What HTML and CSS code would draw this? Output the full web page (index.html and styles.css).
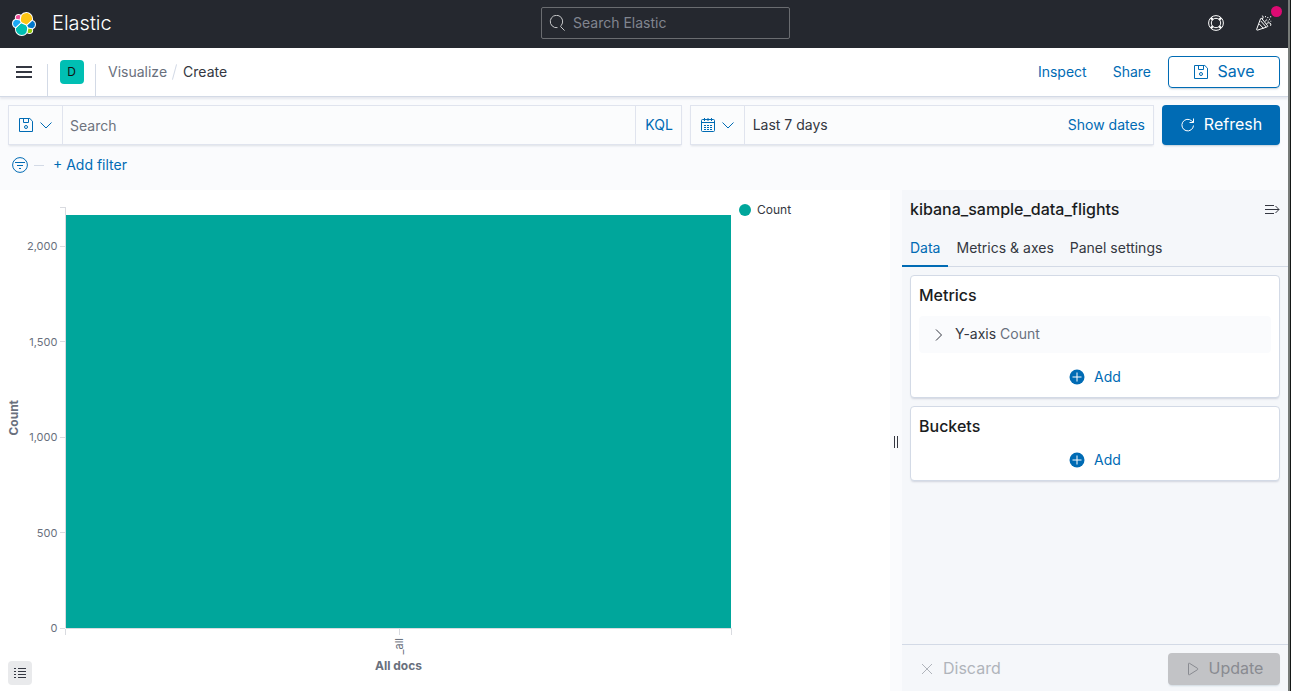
FILE: index.html
```html
<!DOCTYPE html>
<html lang="en">
<head>
<meta charset="utf-8">
<title>Create - Elastic</title>
<link rel="stylesheet" href="styles.css">
</head>
<body>
<div class="app">
  <header class="header">
    <a class="brand" href="#">
      <svg class="brand-logo" viewBox="0 0 32 32" aria-hidden="true">
        <g stroke="#fff" stroke-width="2.6" stroke-linejoin="round" paint-order="stroke">
          <path fill="#fec514" d="M12.58 13.787l7.002 3.211 7.066-6.213a7.849 7.849 0 00.152-1.557c0-4.287-3.464-7.772-7.722-7.772a7.718 7.718 0 00-6.38 3.357l-1.175 6.117z"/>
          <path fill="#00bfb3" d="M5.333 21.228A7.964 7.964 0 005.18 22.8c0 4.3 3.475 7.796 7.746 7.796a7.72 7.72 0 006.393-3.389l1.165-6.104-1.557-2.978-7.03-3.211z"/>
          <path fill="#f04e98" d="M5.288 9.067l4.8 1.137L11.14 4.73a3.785 3.785 0 00-2.3-.775A3.803 3.803 0 005.05 7.76c0 .445.08.886.237 1.302z"/>
          <path fill="#1ba9f5" d="M4.872 10.214a5.317 5.317 0 00-3.54 5.026 5.34 5.34 0 003.43 4.982l6.733-6.115-1.236-2.652z"/>
          <path fill="#93c90e" d="M20.87 27.208a3.766 3.766 0 002.286.78 3.786 3.786 0 003.783-3.785 3.78 3.78 0 00-.234-1.302l-4.797-1.128z"/>
          <path fill="#0077cc" d="M21.848 20.563l5.28 1.237a5.34 5.34 0 003.54-5.027 5.333 5.333 0 00-3.424-4.972l-6.906 6.075z"/>
        </g>
      </svg>
      <span>Elastic</span>
    </a>
    <label class="global-search">
      <svg class="icon" viewBox="0 0 16 16" aria-hidden="true"><path d="M8.500 12.600A6.200 6.200 0 1 1 12.200 10.500L11.600 11.600L15.600 15.600"/></svg>
      <input type="search" placeholder="Search Elastic" aria-label="Search Elastic">
    </label>
    <div class="header-actions">
      <button class="header-button" type="button" aria-label="Help">
        <svg class="icon" viewBox="0 0 16 16"><circle cx="8" cy="8" r="7.400"/><circle cx="8" cy="8" r="4.700"/><path stroke-width="2.200" d="M2.900 2.900l1.900 1.900M13.100 2.900l-1.900 1.900M2.900 13.100l1.900-1.900M13.100 13.100l-1.900-1.900"/></svg>
      </button>
      <button class="header-button" type="button" aria-label="What's new">
        <svg class="icon" viewBox="0 0 16 16"><path d="M4.600 3.600L.7 14.200q-.3 1.200.9.900l9.800-3.300q.8-.4.1-1.200L5.900 3.700q-.9-.9-1.300-.1zM4.800 6l5.400 6M3.300 9l4.300 4.500M6.400 4.200Q8 1.900 6.400.6M8.800 6.600l2.400-2.200M10.600 8.600q1.500-1.400 3.200-.7 1.700.9.800 2.900"/><path d="M9.500 1.100v1.100M11.800 3v-1M14.700 1.200v1.200M13 4.300h1M14.800 5.800v.8M12.700 6.100h-1"/></svg>
        <span class="notification-dot"></span>
      </button>
    </div>
  </header>

  <nav class="navbar" aria-label="Page">
    <button class="menu-button" type="button" aria-label="Toggle navigation">
      <svg class="icon" viewBox="0 0 16 16"><path stroke-width="2" d="M0 3h16M0 8h16M0 13h16"/></svg>
    </button>
    <div class="space-slot"><button class="space-avatar" type="button" aria-label="Default space">D</button></div>
    <ol class="breadcrumbs">
      <li><a href="#">Visualize</a></li>
      <li aria-current="page">Create</li>
    </ol>
    <div class="nav-actions">
      <a href="#">Inspect</a>
      <a href="#">Share</a>
      <button class="button button-outline" type="button">
        <svg class="icon" viewBox="0 0 16 16"><path d="M1.500 1.500h10.300l2.700 2.700v10.300h-13zM5.500 1.500v4h5v-4"/><circle cx="8" cy="10" r="1.500"/></svg>
        <span>Save</span>
      </button>
    </div>
  </nav>

  <section class="query">
    <div class="query-row">
      <div class="control search-control">
        <button class="control-prepend" type="button" aria-label="Saved queries">
          <svg class="icon" viewBox="0 0 16 16"><path d="M1.500 1.500h10.300l2.700 2.700v10.300h-13zM5.500 1.500v4h5v-4"/><circle cx="8" cy="10" r="1.500"/></svg>
          <svg class="icon chevron" viewBox="0 0 12 12"><path d="M.5 3.500L6 9l5.500-5.500"/></svg>
        </button>
        <input type="text" placeholder="Search" aria-label="Search">
        <button class="kql" type="button">KQL</button>
      </div>
      <div class="control date-control">
        <button class="control-prepend" type="button" aria-label="Date quick select">
          <svg class="icon" viewBox="0 0 16 16"><rect x="1.500" y="2.500" width="13" height="12" rx="1"/><path d="M1.500 5.500h13M4.500 1v3M8 1v3M11.500 1v3"/><path stroke-dasharray="2 1" d="M4 8.500h8M4 10.500h8M4 12.500h8"/></svg>
          <svg class="icon chevron" viewBox="0 0 12 12"><path d="M.5 3.500L6 9l5.500-5.500"/></svg>
        </button>
        <button class="date-range" type="button">Last 7 days</button>
        <button class="show-dates" type="button">Show dates</button>
      </div>
      <button class="button button-primary" type="button">
        <svg class="icon" viewBox="0 0 16 16"><path d="M13.500 8.500A5.800 5.800 0 1 1 11.700 3.900L13.500 5.500M13.500 1.500v4h-4"/></svg>
        <span>Refresh</span>
      </button>
    </div>
    <div class="filter-row">
      <button class="filter-button" type="button" aria-label="Filter options">
        <svg class="icon" viewBox="0 0 16 16"><circle cx="8" cy="8" r="7.400"/><path d="M3 5.500h10M5 8.500h6M7 11.500h2"/></svg>
      </button>
      <span class="filter-dash"></span>
      <button class="link-button" type="button">+ Add filter</button>
    </div>
  </section>

  <main class="workspace">
    <section class="visualization" aria-label="Visualization">
      <div class="chart">
        <div class="y-title"><span>Count</span></div>
        <div class="y-axis">
          <span class="axis-end"></span><span>2,000</span><span>1,500</span><span>1,000</span><span>500</span><span>0</span>
        </div>
        <div class="plot"><div class="bar"></div></div>
        <div class="x-axis"><span class="x-label">_all</span></div>
        <div class="x-title">All docs</div>
      </div>
      <button class="legend-item" type="button"><span class="legend-dot"></span>Count</button>
      <button class="legend-toggle" type="button" aria-label="Toggle legend">
        <svg class="icon" viewBox="0 0 12 12"><path d="M0 1.500h2M4 1.500h8M0 4.500h2M4 4.500h8M0 7.500h2M4 7.500h8M0 10.500h2M4 10.500h8"/></svg>
      </button>
    </section>

    <div class="resizer" role="separator" aria-orientation="vertical"><span class="grip"></span></div>

    <aside class="sidebar">
      <div class="sidebar-title">
        <h2>kibana_sample_data_flights</h2>
        <button class="icon-button" type="button" aria-label="Collapse sidebar">
          <svg class="icon" viewBox="0 0 16 16"><path d="M1 3.500h9M1 7.500h14M1 11.500h9M11.500 4l3.500 3.500L11.500 11"/></svg>
        </button>
      </div>
      <div class="tabs" role="tablist">
        <button class="tab tab-selected" type="button" role="tab" aria-selected="true">Data</button>
        <button class="tab" type="button" role="tab">Metrics &amp; axes</button>
        <button class="tab" type="button" role="tab">Panel settings</button>
      </div>
      <div class="panels">
        <section class="panel">
          <h3>Metrics</h3>
          <button class="agg-row" type="button">
            <svg class="icon" viewBox="0 0 16 16"><path d="M5 2.500l5.500 5.500L5 13.500"/></svg>
            <span>Y-axis <span class="subdued">Count</span></span>
          </button>
          <button class="add-button" type="button">
            <svg class="icon" viewBox="0 0 16 16"><circle class="add-disc" cx="8" cy="8" r="7.500"/><path class="add-cross" d="M3.500 8h9M8 3.500v9"/></svg>Add
          </button>
        </section>
        <section class="panel">
          <h3>Buckets</h3>
          <button class="add-button" type="button">
            <svg class="icon" viewBox="0 0 16 16"><circle class="add-disc" cx="8" cy="8" r="7.500"/><path class="add-cross" d="M3.500 8h9M8 3.500v9"/></svg>Add
          </button>
        </section>
      </div>
      <footer class="sidebar-footer">
        <button class="button button-empty" type="button" disabled>
          <svg class="icon" viewBox="0 0 16 16"><path d="M3 3l10 10M13 3L3 13"/></svg>
          <span>Discard</span>
        </button>
        <button class="button button-disabled" type="button" disabled>
          <svg class="icon" viewBox="0 0 16 16"><path d="M3.500 2.800v10.400q0 1 1 .5l8-5q.9-.7 0-1.400l-8-5q-1-.5-1 .5z"/></svg>
          <span>Update</span>
        </button>
      </footer>
    </aside>
  </main>
</div>
</body>
</html>
```
FILE: styles.css
```css
* { box-sizing: border-box; }

body {
  margin: 0;
  background: #777b78;
  border-right: 1px solid #151817;
  color: #343741;
  font: 400 14px/20px Inter, "Liberation Sans", sans-serif;
}

button, input {
  margin: 0;
  padding: 0;
  border: 0;
  background: none;
  color: inherit;
  font: inherit;
}

a { color: #006bb4; text-decoration: none; }
h2, h3 { margin: 0; color: #1a1c21; font-weight: 600; }

.icon {
  flex: none;
  width: 16px;
  height: 16px;
  fill: none;
  stroke: currentColor;
}

.app {
  display: flex;
  flex-direction: column;
  min-height: 100vh;
  margin-right: 2px;
  background: #fff;
}

/* Dark header */
.header {
  display: grid;
  grid-template-columns: 529fr 249px 498fr;
  align-items: center;
  height: 48px;
  padding-left: 12px;
  background: #25282f;
}

.brand {
  display: flex;
  align-items: center;
  gap: 16px;
  color: #fff;
  font-size: 20px;
  font-weight: 300;
}

.brand span { padding-bottom: 2px; }
.brand-logo { width: 24px; height: 24px; overflow: visible; }

.global-search {
  display: flex;
  align-items: center;
  gap: 8px;
  height: 32px;
  margin-bottom: 2px;
  padding: 0 7px;
  border: 1px solid #6a6c70;
  border-radius: 2px;
  color: #c6c7c9;
}

.global-search input { flex: 1; min-width: 0; outline: 0; }
.global-search input::placeholder { color: #81858f; opacity: 1; }

.header-actions { display: flex; justify-content: flex-end; color: #fff; }

.header-button {
  display: grid;
  place-items: center;
  position: relative;
  width: 48px;
  height: 48px;
  padding-bottom: 2px;
}

.notification-dot {
  position: absolute;
  top: 6px;
  right: 6px;
  width: 11px;
  height: 11px;
  border-radius: 50%;
  background: #dd0a73;
}

/* Breadcrumb bar */
.navbar {
  display: flex;
  align-items: center;
  height: 49px;
  padding-right: 8px;
  border-bottom: 1px solid #d3dae6;
  box-shadow: 0 2px 2px rgba(152, 162, 179, 0.2);
  z-index: 1;
}

.menu-button { display: grid; place-items: center; width: 47px; height: 48px; }

.space-slot {
  display: flex;
  justify-content: center;
  align-self: flex-end;
  width: 49px;
  height: 32px;
  border: solid #d3dae6;
  border-width: 0 1px;
}

.space-avatar {
  width: 24px;
  height: 24px;
  margin-top: -4px;
  border-radius: 4px;
  background: #00bfb3;
  color: #111;
  font-size: 12px;
  line-height: 24px;
}

.breadcrumbs {
  display: flex;
  margin: 0 0 0 12px;
  padding: 0;
  list-style: none;
}

.breadcrumbs li { display: flex; }
.breadcrumbs a { color: #69707d; }

.breadcrumbs li + li::before {
  content: "";
  width: 1px;
  height: 16px;
  margin: 2px 8px 2px 7px;
  background: #d3dae6;
  transform: rotate(15deg);
}

.nav-actions { display: flex; align-items: center; gap: 26px; margin-left: auto; }
.nav-actions .button { margin-left: -9px; }

.button {
  display: flex;
  align-items: center;
  justify-content: center;
  gap: 8px;
  height: 32px;
  border-radius: 4px;
  font-size: 16px;
}

.button span { padding-bottom: 2px; }

.button-outline {
  width: 112px;
  border: 1px solid #006bb4;
  color: #006bb4;
  box-shadow: 0 2px 2px -1px rgba(54, 97, 126, 0.3);
}

.button-primary {
  width: 118px;
  height: 40px;
  background: #006bb4;
  color: #fff;
  box-shadow: 0 2px 2px -1px rgba(54, 97, 126, 0.3);
}

/* Query bar */
.query { padding: 8px 8px 0; height: 93px; background: #fafbfd; }
.query-row { display: flex; gap: 8px; }

.control {
  display: flex;
  height: 40px;
  border: 1px solid #e0e4ee;
  background: #fbfcfd;
  box-shadow: 0 2px 2px -1px rgba(152, 162, 179, 0.3);
}

.search-control { flex: 674; }
.date-control { flex: 464; }

.control-prepend {
  display: flex;
  align-items: center;
  gap: 6px;
  padding: 0 10px 0 9px;
  border-right: 1px solid #e0e4ee;
  color: #006bb4;
}

.chevron { width: 12px; height: 12px; }

.control input { flex: 1; min-width: 0; padding: 2px 7px 0; outline: 0; }
.control input::placeholder { color: #6e737e; opacity: 1; }

.kql { width: 46px; padding-left: 2px; border-left: 1px solid #e0e4ee; color: #006bb4; }
.date-range { flex: 1; padding-left: 8px; text-align: left; }
.show-dates { padding: 0 8px; color: #006bb4; }

.filter-row { display: flex; align-items: center; margin-top: 10px; padding-left: 4px; }
.filter-button { display: flex; color: #006bb4; }
.filter-dash { width: 10px; height: 1px; margin: 0 9px 0 6px; background: #d3dae6; }
.link-button { color: #006bb4; }

/* Visualization */
.workspace { display: flex; flex: 1; }

.visualization {
  display: flex;
  position: relative;
  flex: 1;
  padding-top: 17px;
}

.chart {
  display: grid;
  flex: 1;
  grid-template: 1fr 27px 36px / 27px 39px 1fr;
  min-width: 0;
  color: #69707d;
  font-size: 11px;
  line-height: 16px;
}

.y-title { display: grid; place-items: center; font-size: 12px; font-weight: 700; }
.y-title span { writing-mode: vertical-rl; transform: rotate(180deg); }

.y-axis {
  display: grid;
  grid-template-rows: 0fr 2fr 5fr 5fr 5fr 5fr;
  border-right: 1px solid #d9dbe0;
  text-align: right;
}

.y-axis span {
  display: flex;
  align-items: center;
  align-self: end;
  justify-content: flex-end;
  gap: 3px;
  height: 16px;
  margin-bottom: -8px;
}

.y-axis span::after { content: ""; width: 5px; height: 1px; background: #d9dbe0; }
.y-axis .axis-end { height: 1px; margin-bottom: 0; }

.plot { display: flex; align-items: flex-end; }
.bar { width: 100%; height: 98%; background: #00a69b; }

.x-axis {
  display: flex;
  grid-column: 3;
  flex-direction: column;
  align-items: center;
  margin-right: -1px;
  border-top: 1px solid #d9dbe0;
  background:
    linear-gradient(#d9dbe0, #d9dbe0) 50% 0 / 1px 6px no-repeat,
    linear-gradient(#d9dbe0, #d9dbe0) 100% 0 / 1px 6px no-repeat;
}

.x-axis::before {
  content: "";
  align-self: flex-start;
  width: 1px;
  height: 6px;
  margin-left: -1px;
  background: #d9dbe0;
}

.x-label { margin-top: 3px; writing-mode: vertical-rl; transform: rotate(180deg); }
.x-title { grid-column: 3; margin-top: 3px; text-align: center; font-size: 12px; font-weight: 700; }

.legend-item {
  display: flex;
  align-items: center;
  align-self: flex-start;
  gap: 6px;
  width: 159px;
  margin-top: -5px;
  padding-left: 8px;
  font-size: 12px;
  line-height: 16px;
}

.legend-dot { width: 12px; height: 12px; border-radius: 50%; background: #00a69b; }

.legend-toggle {
  display: grid;
  position: absolute;
  bottom: 6px;
  left: 8px;
  place-items: center;
  width: 24px;
  height: 24px;
  border-radius: 4px;
  background: #e9eaec;
}

.legend-toggle .icon { width: 12px; height: 12px; }

.resizer { display: grid; place-items: center; width: 12px; padding-top: 2px; background: #fafbfd; }
.grip { width: 4px; height: 12px; border: solid #343741; border-width: 0 1px; }

/* Sidebar */
.sidebar { display: flex; flex-direction: column; width: 386px; background: #f5f7fa; }

.sidebar-title {
  display: flex;
  align-items: center;
  justify-content: space-between;
  height: 40px;
  padding: 0 8px;
}

.sidebar-title h2 { padding-bottom: 2px; font-size: 16px; font-weight: 500; }
.icon-button { display: flex; }
.tabs { display: flex; height: 37px; border-bottom: 1px solid #d3dae6; }
.tab { height: 37px; padding: 0 8px; border-bottom: 2px solid transparent; }
.tab-selected { border-color: #006bb4; color: #006bb4; }
.panels { display: grid; gap: 8px; padding: 8px; }

.panel {
  padding: 9px 8px 10px;
  border: 1px solid #d3dae6;
  border-radius: 4px;
  background: #fff;
  box-shadow: 0 2px 2px -1px rgba(152, 162, 179, 0.4);
}

.panel h3 { font-size: 16px; font-weight: 500; }

.agg-row {
  display: flex;
  align-items: center;
  gap: 8px;
  width: 100%;
  height: 37px;
  margin-top: 11px;
  padding-left: 12px;
  border-radius: 4px;
  background: #fafbfd;
}

.agg-row > span { padding-bottom: 2px; }
.subdued { color: #69707d; }

.add-button {
  display: flex;
  align-items: center;
  gap: 9px;
  margin: 14px auto 0;
  color: #006bb4;
}

.add-disc { fill: #006bb4; stroke: none; }
.add-cross { stroke: #fff; }

.sidebar-footer {
  display: flex;
  justify-content: space-between;
  height: 47px;
  margin-top: auto;
  padding: 8px 8px 0;
  border-top: 1px solid #d3dae6;
}

.button-empty { padding: 0 9px; color: #b0b4bb; }

.button-disabled {
  width: 112px;
  background: #c2c3c6;
  color: #898b91;
  box-shadow: 0 2px 2px -1px rgba(54, 97, 126, 0.2);
}
```
